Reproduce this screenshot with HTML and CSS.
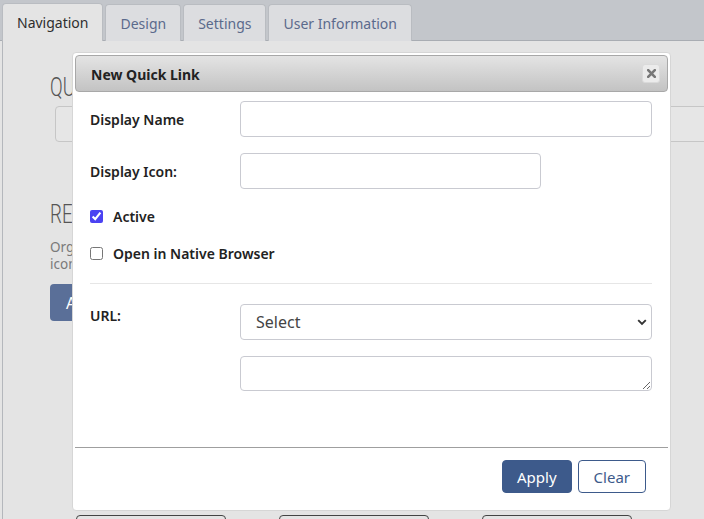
FILE: index.html
```html
<!DOCTYPE html>
<html lang="en">
<head>
<meta charset="utf-8">
<title>New Quick Link</title>
<link rel="stylesheet" href="styles.css">
</head>
<body>
<div class="page">
  <div class="tabbar">
    <div class="tab active">Navigation</div>
    <div class="tab">Design</div>
    <div class="tab">Settings</div>
    <div class="tab">User Information</div>
  </div>
  <div class="panel">
    <h2 class="section-title">QUICK LINKS</h2>
    <div class="search-box"></div>
    <h2 class="section-title second">RESOURCES</h2>
    <p class="section-text">Organize the resource links shown in the menu, with a name,<br>icon and address for each.</p>
    <button class="btn-add">Add Resource</button>
    <div class="panel-actions">
      <button class="btn-outline" aria-label="Import"></button>
      <button class="btn-outline" aria-label="Export"></button>
      <button class="btn-outline" aria-label="Reset"></button>
    </div>
  </div>

  <div class="modal">
    <div class="modal-header">
      <span class="modal-title">New Quick Link</span>
      <button class="close-btn" aria-label="Close">
        <svg width="9" height="9" viewBox="0 0 9 9"><path d="M1.2 1.2 L7.8 7.8 M7.8 1.2 L1.2 7.8" stroke="#777" stroke-width="2.6" stroke-linecap="square"/></svg>
      </button>
    </div>
    <div class="modal-body">
      <div class="form-row">
        <label class="form-label">Display Name</label>
        <input class="text-input" type="text">
      </div>
      <div class="form-row">
        <label class="form-label">Display Icon:</label>
        <input class="text-input short" type="text">
      </div>
      <div class="check-row">
        <input id="chk-active" type="checkbox" checked>
        <label for="chk-active">Active</label>
      </div>
      <div class="check-row">
        <input id="chk-native" type="checkbox">
        <label for="chk-native">Open in Native Browser</label>
      </div>
      <div class="divider"></div>
      <div class="form-row url-row">
        <label class="form-label url-label">URL:</label>
        <div class="url-fields">
          <div class="select-wrap">
            <select class="select-input">
              <option>Select</option>
            </select>
            <svg class="chevron" width="10" height="7" viewBox="0 0 10 7"><path d="M1.2 1.2 L5 5 L8.8 1.2" fill="none" stroke="#333" stroke-width="1.9"/></svg>
          </div>
          <textarea class="text-area"></textarea>
        </div>
      </div>
    </div>
    <div class="modal-footer">
      <button class="btn btn-primary">Apply</button>
      <button class="btn btn-secondary">Clear</button>
    </div>
  </div>
</div>
</body>
</html>
```

FILE: styles.css
```css
html, body {
  margin: 0;
  padding: 0;
  height: 100%;
  overflow: hidden;
}

body {
  font-family: "Noto Sans", "Open Sans", sans-serif;
  background: #e4e4e4;
  color: #222;
}

.page {
  position: relative;
  height: 519px;
  overflow: hidden;
}

/* Tabs */
.tabbar {
  display: flex;
  align-items: flex-end;
  gap: 2px;
  height: 41px;
  box-sizing: border-box;
  padding: 0 0 0 2px;
  background: #c3c6cb;
  border-bottom: 1px solid #a9adb3;
}

.tab {
  height: 37px;
  box-sizing: border-box;
  padding: 0 14px;
  margin-bottom: -1px;
  display: flex;
  align-items: center;
  font-size: 14px;
  color: #5b6a8c;
  background: #dcdde0;
  border: 1px solid #b9bcc1;
  border-bottom: none;
  border-radius: 4px 4px 0 0;
}

.tab.active {
  color: #2e2e2e;
  background: #e4e4e4;
  height: 38px;
}

/* Background panel */
.panel {
  margin-left: 2px;
  border-left: 1px solid #b4b7bc;
  padding: 30px 0 0 47px;
  height: 600px;
  background: #e4e4e4;
}

.section-title {
  margin: 0;
  font-family: "Roboto", "Noto Sans", sans-serif;
  font-weight: 300;
  font-size: 26px;
  line-height: 32px;
  color: #555;
  transform: scaleX(0.72);
  transform-origin: left center;
}

.section-title.second {
  margin-top: 56px;
}

.search-box {
  margin: 3px 0 0 5px;
  height: 36px;
  width: 900px;
  box-sizing: border-box;
  border: 1px solid #c6c6c6;
  border-radius: 4px;
  background: #e6e6e6;
}

.section-text {
  margin: 9px 0 0;
  font-size: 13.5px;
  line-height: 17px;
  color: #7a7a7a;
}

.btn-add {
  margin-top: 11px;
  height: 37px;
  padding: 0 16px;
  border: none;
  border-radius: 4px;
  background: #5a6f98;
  color: #fff;
  font-family: inherit;
  font-size: 16px;
}

.panel-actions {
  display: flex;
  gap: 53px;
  margin: 194px 0 0 26px;
}

.btn-outline {
  width: 150px;
  height: 34px;
  border: 1px solid #444;
  border-radius: 4px;
  background: #e4e4e4;
}

/* Modal */
.modal {
  position: absolute;
  top: 52px;
  left: 72px;
  width: 599px;
  box-sizing: border-box;
  background: #fff;
  border: 1px solid #d6d6d6;
  border-radius: 4px;
  padding: 2px;
}

.modal-header {
  display: flex;
  align-items: center;
  justify-content: space-between;
  height: 37px;
  box-sizing: border-box;
  padding: 0 7px 0 15px;
  border: 1px solid #a8a8a8;
  border-radius: 4px;
  background: linear-gradient(#e4e4e4, #c3c3c3);
}

.modal-title {
  font-size: 14px;
  font-weight: 700;
  color: #222;
  padding-top: 2px;
}

.close-btn {
  width: 18px;
  height: 19px;
  padding: 0;
  display: flex;
  align-items: center;
  justify-content: center;
  background: #ebebeb;
  border: 1px solid #dadada;
  border-radius: 3px;
}

.modal-body {
  padding: 9px 16px 0 15px;
}

.form-row {
  display: flex;
  align-items: center;
  height: 36px;
}

.form-row + .form-row {
  margin-top: 16px;
}

.form-label {
  flex: none;
  width: 150px;
  font-size: 14px;
  font-weight: 600;
  color: #222;
}

.text-input {
  flex: 1;
  min-width: 0;
  height: 36px;
  box-sizing: border-box;
  border: 1px solid #c9cad1;
  border-radius: 4px;
  background: #fff;
  padding: 0 12px;
  font-family: inherit;
  font-size: 15px;
}

.text-input.short {
  flex: none;
  width: 301px;
}

.check-row {
  display: flex;
  align-items: center;
  gap: 10px;
  height: 20px;
  margin-top: 17px;
  font-size: 14px;
  font-weight: 600;
  color: #222;
}

.check-row input {
  flex: none;
  margin: 0;
  width: 13px;
  height: 13px;
  accent-color: #4b42f2;
}

.divider {
  border-top: 1px solid #e6e6e6;
  margin: 20px 0;
}

.url-row {
  align-items: flex-start;
  height: auto;
}

.url-label {
  line-height: 20px;
  padding-top: 2px;
}

.url-fields {
  flex: 1;
  display: flex;
  flex-direction: column;
  gap: 16px;
}

.select-wrap {
  position: relative;
}

.select-input {
  display: block;
  width: 100%;
  height: 36px;
  box-sizing: border-box;
  appearance: none;
  -webkit-appearance: none;
  border: 1px solid #c9cad1;
  border-radius: 4px;
  background: #fff;
  padding: 0 0 0 15px;
  font-family: inherit;
  font-size: 16px;
  color: #444;
}

.chevron {
  position: absolute;
  right: 5px;
  top: 15px;
  pointer-events: none;
}

.text-area {
  display: block;
  width: 100%;
  height: 35px;
  box-sizing: border-box;
  border: 1px solid #c9cad1;
  border-radius: 4px;
  font-family: inherit;
}

.modal-footer {
  margin-top: 56px;
  border-top: 1px solid #9f9f9f;
  padding: 12px 22px 15px;
  display: flex;
  justify-content: flex-end;
  gap: 6px;
}

.btn {
  height: 33px;
  padding: 0 14px;
  border-radius: 4px;
  font-family: inherit;
  font-size: 15px;
}

.btn-primary {
  background: #3d5a8b;
  border: 1px solid #3d5a8b;
  color: #fff;
}

.btn-secondary {
  padding: 0 15px;
  background: #fff;
  border: 1px solid #3d5a8b;
  color: #3d5a8b;
}
```
